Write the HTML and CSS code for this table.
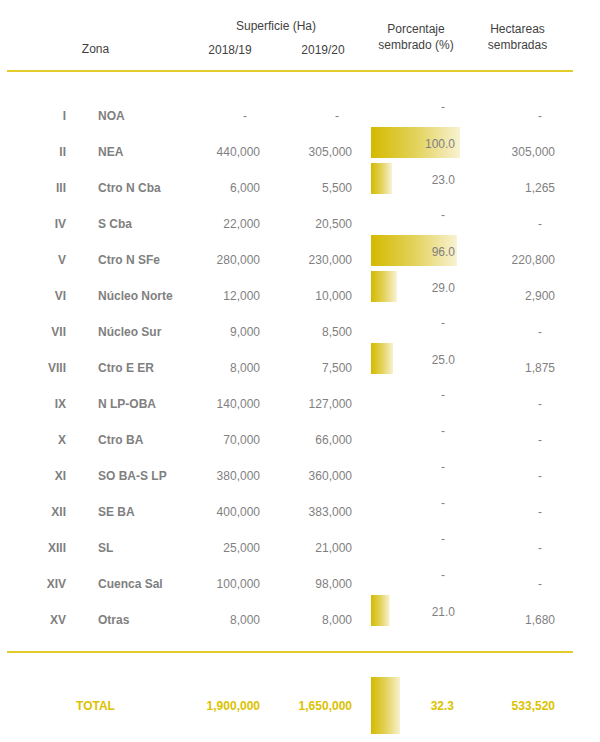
FILE: index.html
```html
<!DOCTYPE html>
<html lang="es">
<head>
<meta charset="utf-8">
<title>Superficie sembrada por zona</title>
<link rel="stylesheet" href="styles.css">
</head>
<body>
<div class="table">
  <div class="head">
    <div class="h-zona">Zona</div>
    <div class="h-sup">Superficie (Ha)</div>
    <div class="h-y1">2018/19</div>
    <div class="h-y2">2019/20</div>
    <div class="h-pct">Porcentaje<br>sembrado (%)</div>
    <div class="h-hec">Hectareas<br>sembradas</div>
  </div>
  <div class="body">
    <div class="row"><div class="c-rom">I</div><div class="c-name">NOA</div><div class="c-y1 dash">-</div><div class="c-y2 dash">-</div><div class="c-pct dash">-</div><div class="c-hec dash">-</div></div>
    <div class="row"><div class="c-rom">II</div><div class="c-name">NEA</div><div class="c-y1">440,000</div><div class="c-y2">305,000</div><div class="c-pct bar" style="background-size:100% 100%">100.0</div><div class="c-hec">305,000</div></div>
    <div class="row"><div class="c-rom">III</div><div class="c-name">Ctro N Cba</div><div class="c-y1">6,000</div><div class="c-y2">5,500</div><div class="c-pct bar" style="background-size:23.5% 100%">23.0</div><div class="c-hec">1,265</div></div>
    <div class="row"><div class="c-rom">IV</div><div class="c-name">S Cba</div><div class="c-y1">22,000</div><div class="c-y2">20,500</div><div class="c-pct dash">-</div><div class="c-hec dash">-</div></div>
    <div class="row"><div class="c-rom">V</div><div class="c-name">Ctro N SFe</div><div class="c-y1">280,000</div><div class="c-y2">230,000</div><div class="c-pct bar" style="background-size:96.5% 100%">96.0</div><div class="c-hec">220,800</div></div>
    <div class="row"><div class="c-rom">VI</div><div class="c-name">Núcleo Norte</div><div class="c-y1">12,000</div><div class="c-y2">10,000</div><div class="c-pct bar" style="background-size:29% 100%">29.0</div><div class="c-hec">2,900</div></div>
    <div class="row"><div class="c-rom">VII</div><div class="c-name">Núcleo Sur</div><div class="c-y1">9,000</div><div class="c-y2">8,500</div><div class="c-pct dash">-</div><div class="c-hec dash">-</div></div>
    <div class="row"><div class="c-rom">VIII</div><div class="c-name">Ctro E ER</div><div class="c-y1">8,000</div><div class="c-y2">7,500</div><div class="c-pct bar" style="background-size:25% 100%">25.0</div><div class="c-hec">1,875</div></div>
    <div class="row"><div class="c-rom">IX</div><div class="c-name">N LP-OBA</div><div class="c-y1">140,000</div><div class="c-y2">127,000</div><div class="c-pct dash">-</div><div class="c-hec dash">-</div></div>
    <div class="row"><div class="c-rom">X</div><div class="c-name">Ctro BA</div><div class="c-y1">70,000</div><div class="c-y2">66,000</div><div class="c-pct dash">-</div><div class="c-hec dash">-</div></div>
    <div class="row"><div class="c-rom">XI</div><div class="c-name">SO BA-S LP</div><div class="c-y1">380,000</div><div class="c-y2">360,000</div><div class="c-pct dash">-</div><div class="c-hec dash">-</div></div>
    <div class="row"><div class="c-rom">XII</div><div class="c-name">SE BA</div><div class="c-y1">400,000</div><div class="c-y2">383,000</div><div class="c-pct dash">-</div><div class="c-hec dash">-</div></div>
    <div class="row"><div class="c-rom">XIII</div><div class="c-name">SL</div><div class="c-y1">25,000</div><div class="c-y2">21,000</div><div class="c-pct dash">-</div><div class="c-hec dash">-</div></div>
    <div class="row"><div class="c-rom">XIV</div><div class="c-name">Cuenca Sal</div><div class="c-y1">100,000</div><div class="c-y2">98,000</div><div class="c-pct dash">-</div><div class="c-hec dash">-</div></div>
    <div class="row"><div class="c-rom">XV</div><div class="c-name">Otras</div><div class="c-y1">8,000</div><div class="c-y2">8,000</div><div class="c-pct bar" style="background-size:21% 100%">21.0</div><div class="c-hec">1,680</div></div>
  </div>
  <div class="total">
    <div class="t-label">TOTAL</div>
    <div class="c-y1">1,900,000</div>
    <div class="c-y2">1,650,000</div>
    <div class="t-pct bar" style="background-size:33% 100%">32.3</div>
    <div class="c-hec">533,520</div>
  </div>
</div>
</body>
</html>
```

FILE: styles.css
```css
html, body {
  margin: 0;
  padding: 0;
  background: #ffffff;
}

body {
  font-family: "Liberation Sans", Arial, sans-serif;
  font-size: 12px;
  color: #7f7f7f;
}

.table {
  margin-left: 7px;
  width: 566px;
}

.head,
.row,
.total {
  display: grid;
  grid-template-columns: 59px 134px 60px 34px 58px 19px 89px 20px 75px 18px;
}

.head {
  grid-template-rows: 37px 33px;
  height: 70px;
  border-bottom: 2px solid #e3cb2a;
  color: #3f3f3f;
  line-height: 16px;
}

.h-zona {
  grid-column: 1 / 3;
  grid-row: 2;
  text-align: center;
  padding-top: 4px;
  padding-right: 16px;
}

.h-sup {
  grid-column: 3 / 6;
  grid-row: 1;
  text-align: center;
  padding-top: 18px;
}

.h-y1 {
  grid-column: 3;
  grid-row: 2;
  text-align: center;
  padding-top: 5px;
}

.h-y2 {
  grid-column: 5;
  grid-row: 2;
  text-align: center;
  padding-top: 5px;
}

.h-pct {
  grid-column: 6 / 9;
  grid-row: 1 / 3;
  text-align: center;
  padding-top: 21px;
}

.h-hec {
  grid-column: 9;
  grid-row: 1 / 3;
  text-align: center;
  padding-top: 21px;
  white-space: nowrap;
}

.body {
  padding-top: 26px;
  padding-bottom: 13px;
  border-bottom: 2px solid #e3cb2a;
}

.row {
  height: 36px;
  line-height: 36px;
}

.c-rom {
  grid-column: 1;
  text-align: right;
  font-weight: bold;
}

.c-name {
  grid-column: 2;
  padding-left: 32px;
  font-weight: bold;
  white-space: nowrap;
}

.c-y1 {
  grid-column: 3;
  text-align: right;
}

.c-y2 {
  grid-column: 5;
  text-align: right;
}

.c-pct {
  grid-column: 7;
  text-align: right;
  height: 31px;
  margin-top: -7px;
  line-height: 34px;
  padding-right: 5px;
}

.c-hec {
  grid-column: 9;
  text-align: right;
}

.dash {
  padding-right: 13px;
}

.c-pct.dash {
  padding-right: 15px;
  line-height: 32px;
}

.bar {
  background-image: linear-gradient(to right, #d4ba00 0%, #e3d25a 50%, #f8f2d2 100%);
  background-repeat: no-repeat;
  background-position: left top;
}

.total {
  margin-top: 24px;
  height: 57px;
  line-height: 59px;
  color: #dcc200;
  font-weight: bold;
}

.t-label {
  grid-column: 1 / 3;
  text-align: center;
  padding-right: 16px;
}

.t-pct {
  grid-column: 7;
  background-size: 33% 100%;
  text-align: right;
  padding-right: 6px;
}
```
